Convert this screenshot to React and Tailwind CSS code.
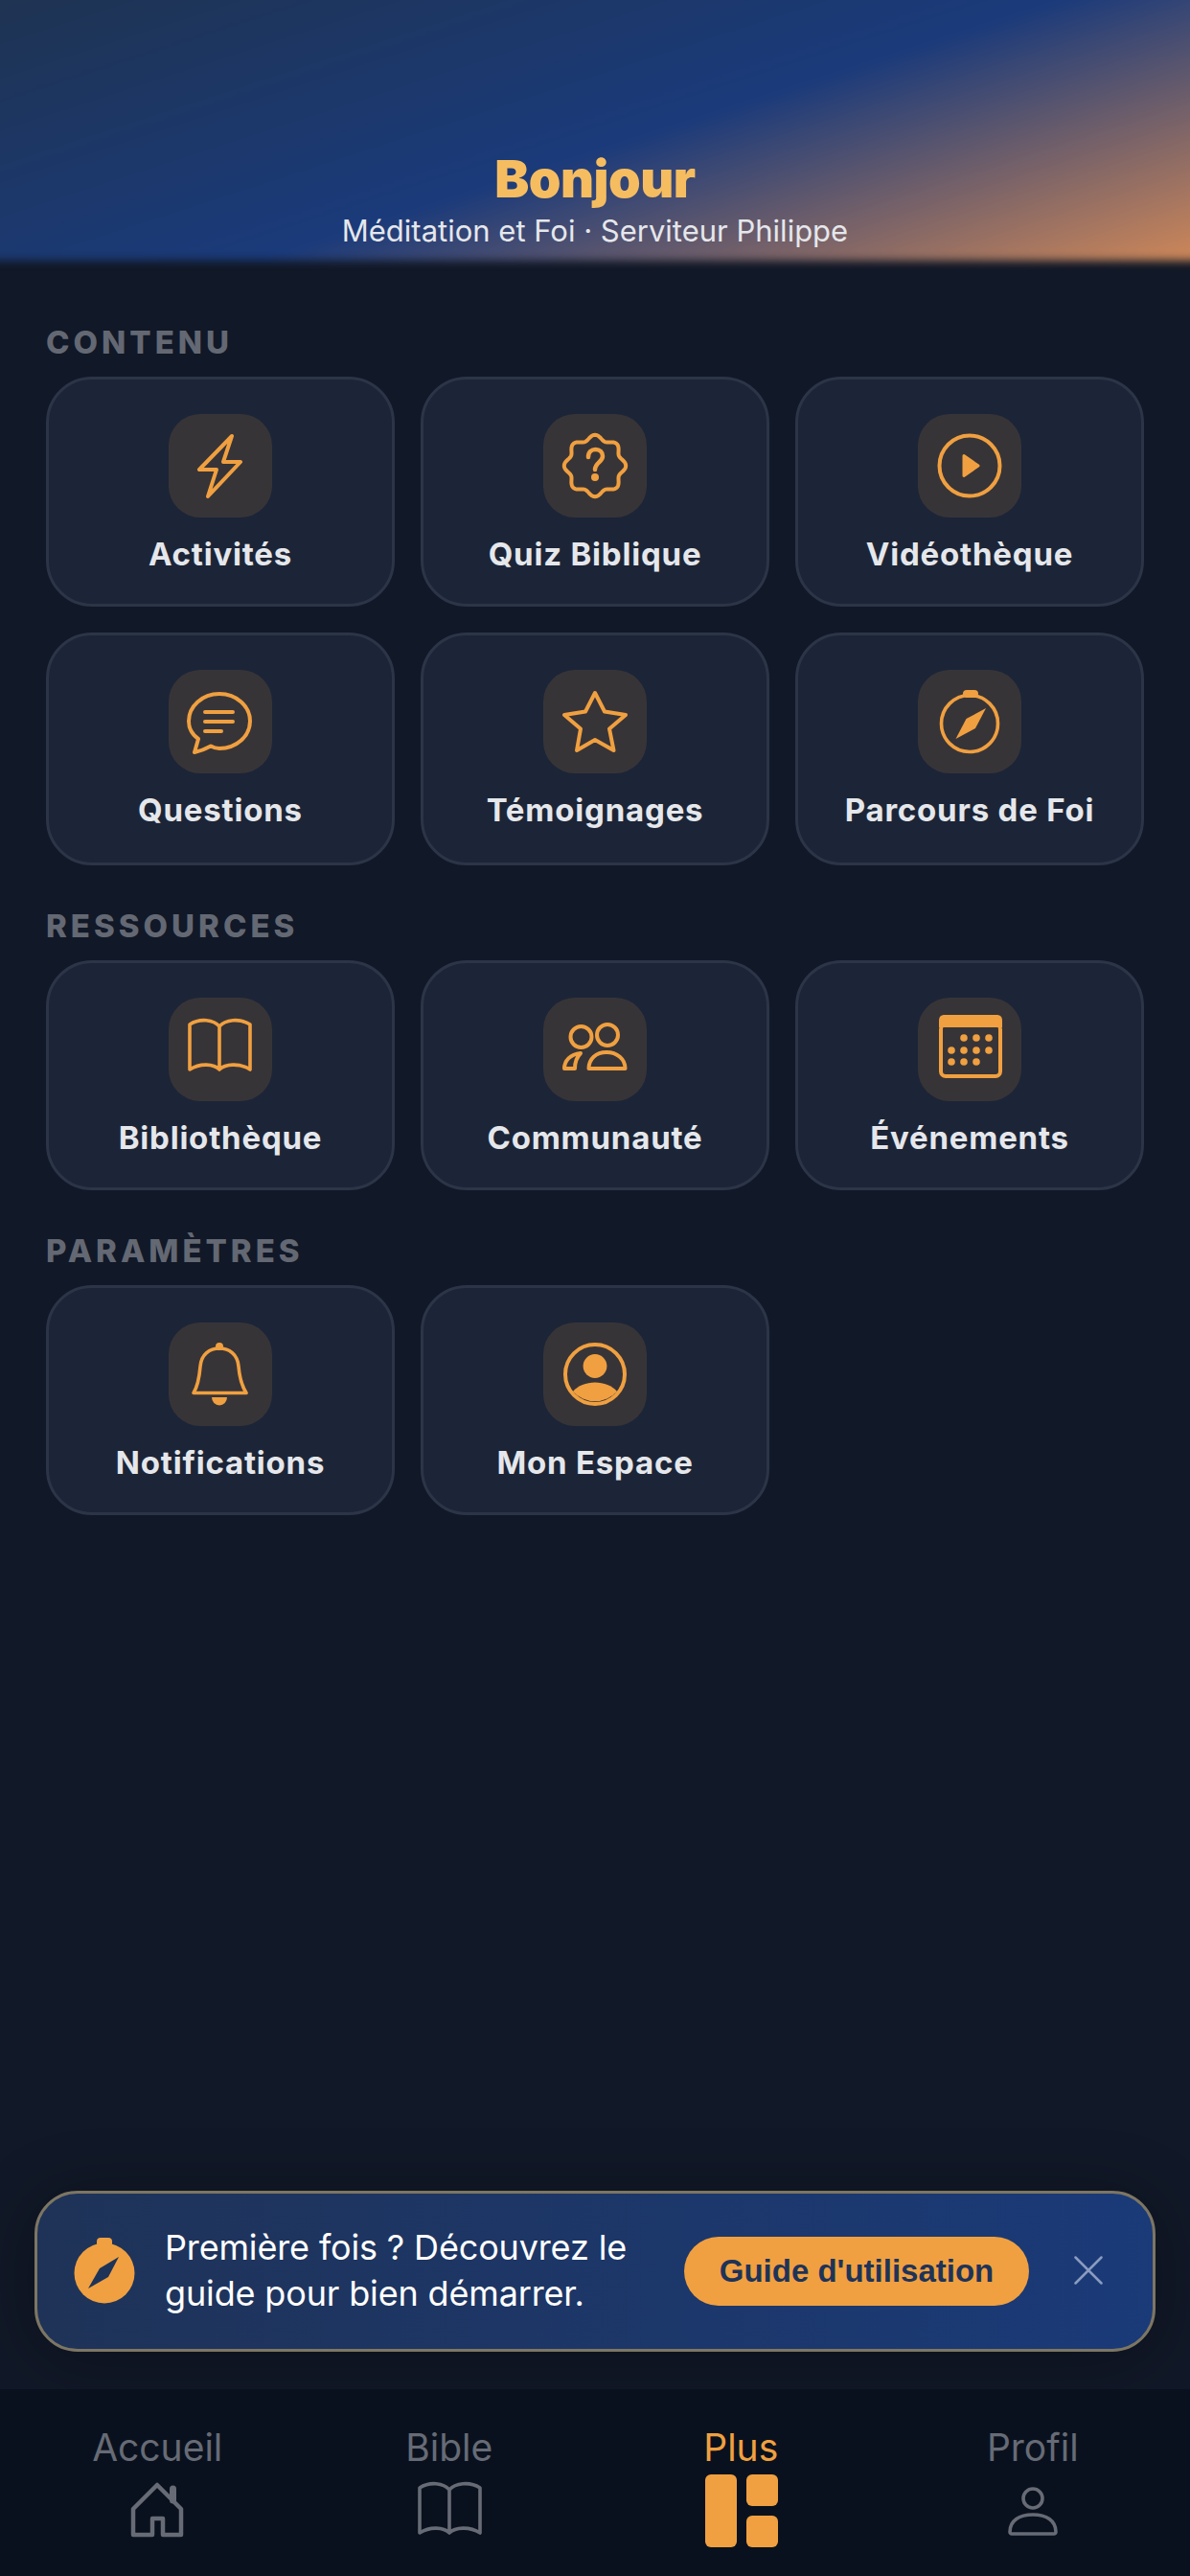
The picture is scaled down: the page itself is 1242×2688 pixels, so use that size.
import React from "react";

const scallop = (() => {
  const n = 8, cx = 54, cy = 54, R = 29.6, A = 2.6;
  let d = "";
  for (let i = 0; i <= 160; i++) {
    const t = (i / 160) * Math.PI * 2;
    const r = R + A * Math.cos(n * t);
    const x = cx + r * Math.sin(t), y = cy - r * Math.cos(t);
    d += (i ? "L" : "M") + x.toFixed(2) + " " + y.toFixed(2);
  }
  return d + "Z";
})();

const S = ({ children, size = 108, vb = "0 0 108 108", className = "" }) => (
  <svg width={size} height={size} viewBox={vb} fill="none" stroke="currentColor" strokeWidth="4" strokeLinejoin="round" strokeLinecap="round" className={className}>
    {children}
  </svg>
);

const icons = {
  bolt: <path d="M66 23L32 58H50L41 86L75 50H57Z" />,
  quiz: (
    <>
      <path d={scallop} />
      <path d="M47 45C47 39.500 50.500 37 54.500 37C59 37 62 40 62 44C62 50 54 51 54 58" strokeWidth="4.500" />
      <circle cx="54" cy="66" r="4" fill="currentColor" stroke="none" />
    </>
  ),
  play: (
    <>
      <circle cx="54" cy="54" r="31.500" />
      <path d="M48 43.500L63 54L48 64.500Z" fill="currentColor" strokeWidth="3" />
    </>
  ),
  chat: (
    <>
      <path d="M44 79.500Q48.500 82 53 82C71 82 85 69 85 53.500C85 38 71 25 53 25C35 25 21 38 21 53.500C21 61 24 67 31 72L27 86Q36 84 44 79.500Z" />
      <path d="M38 44H67M38 54H67M38 64H55" />
    </>
  ),
  star: <path d="M54 24L64 43.500L86 47L69 61.500L73.500 84L54 73L35 84L39 61.500L22 47L44 43.500Z" />,
  compass: (
    <>
      <circle cx="54" cy="56" r="29.500" strokeWidth="3.600" />
      <rect x="47" y="21" width="16" height="8" rx="4" fill="currentColor" stroke="none" />
      <path d="M71 40L60 61L39.500 72L50.500 51Z" fill="currentColor" stroke="none" />
    </>
  ),
  book: <path d="M53 30C47 23 33 21 22 28V75C33 68 47 69 53 75C59 69 74 68 85 75V28C74 21 59 23 53 30ZM53 30V75" strokeWidth="3.600" strokeLinecap="butt" />,
  people: (
    <>
      <circle cx="67" cy="39" r="11" />
      <circle cx="39.500" cy="41" r="11" />
      <path d="M47.500 74C47.500 64 55 57 66 57C77 57 85.500 64 85.500 74Z" />
      <path d="M22 74C22 66 28 59 39 58C35 62 33 67 33 74Z" />
    </>
  ),
  calendar: (
    <>
      <path d="M22 24C22 20 24 18 28 18H82C86 18 88 20 88 24V31H22Z" fill="currentColor" stroke="none" />
      <rect x="24" y="28" width="62" height="54" rx="5" />
      {[[48, 42], [61, 42], [74, 42], [35, 55], [48, 55], [61, 55], [74, 55], [35, 67], [48, 67], [61, 67]].map(([x, y]) => (
        <circle key={x + "-" + y} cx={x} cy={y} r="3.800" fill="currentColor" stroke="none" />
      ))}
    </>
  ),
  bell: (
    <>
      <path d="M26 73.500C30 67 32 58 33 46C34 33 43 27 53 27C63 27 72 33 73 46C74 58 77 67 81 73.500Z" strokeWidth="3.600" />
      <circle cx="53" cy="25" r="4" fill="currentColor" stroke="none" />
      <path d="M45 78H61A8 8.500 0 0 1 45 78Z" fill="currentColor" stroke="none" />
    </>
  ),
  user: (
    <>
      <circle cx="54" cy="54" r="31" />
      <circle cx="54" cy="45.500" r="12.400" fill="currentColor" stroke="none" />
      <path d="M31 72C36 66 45 62.500 54 62.500C63 62.500 72 66 77 72A31 31 0 0 1 31 72Z" fill="currentColor" stroke="none" />
    </>
  ),
};

const Card = ({ icon, label, tall }) => (
  <div className={(tall ? "h-[243px]" : "h-[240px]") + " rounded-[48px] border-[3px] border-[#2c3547] bg-[#1c2537] flex flex-col items-center pt-[36px]"}>
    <div className="w-[108px] h-[108px] rounded-[33px] bg-[#373438] text-[#f0a040]">
      <S>{icons[icon]}</S>
    </div>
    <div className="mt-[18px] text-[33px] leading-[40px] font-bold tracking-[0.8px] text-[#e5e7eb] whitespace-nowrap">{label}</div>
  </div>
);

const Section = ({ title, items, first }) => (
  <section className={first ? "" : "mt-[45px]"}>
    <h2 className="text-[33px] leading-[36px] font-extrabold tracking-[4px] text-[#636873] mb-[18px]">{title}</h2>
    <div className="grid grid-cols-3 gap-[27px]">
      {items.map(([icon, label], i) => <Card key={label} icon={icon} label={label} tall={i >= 3} />)}
    </div>
  </section>
);

const Tab = ({ label, active, children }) => (
  <div className={"flex-1 flex flex-col items-center " + (active ? "text-[#f0a040]" : "text-[#666b75]")}>
    <div className="text-[39px] leading-[48px] mt-[37px]">{label}</div>
    <div className="h-[78px] mt-[3px] flex items-center justify-center">{children}</div>
  </div>
);

export default function App() {
  return (
    <div className="relative w-[1242px] h-[2688px] overflow-hidden bg-[#111827] flex flex-col font-['Inter',sans-serif]">
      <header className="relative h-[272px] shrink-0 flex flex-col items-center justify-end pb-[11px]">
        <div className="absolute -top-4 -left-4 -right-4 bottom-0 blur-[5px] bg-[linear-gradient(162deg,#1f3350_0%,#1a3a7a_54%,#d08858_100%)]" />
        <h1 className="relative text-[54px] leading-[60px] font-black text-[#f6bd60] tracking-[-0.5px]">Bonjour</h1>
        <p className="relative mt-[4px] text-[31px] leading-[40px] text-[#e5e7eb]">Méditation et Foi · Serviteur Philippe</p>
      </header>

      <main className="flex-1 px-12 pt-[67px]">
        <Section first title="CONTENU" items={[["bolt", "Activités"], ["quiz", "Quiz Biblique"], ["play", "Vidéothèque"], ["chat", "Questions"], ["star", "Témoignages"], ["compass", "Parcours de Foi"]]} />
        <Section title="RESSOURCES" items={[["book", "Bibliothèque"], ["people", "Communauté"], ["calendar", "Événements"]]} />
        <Section title="PARAMÈTRES" items={[["bell", "Notifications"], ["user", "Mon Espace"]]} />
      </main>

      <div className="mx-9 mb-[39px] h-[168px] shrink-0 rounded-[45px] border-[3px] border-[#7d7663] bg-[linear-gradient(90deg,#1f3358,#1a3a78)] shadow-[0_8px_70px_rgba(0,0,0,0.3)] flex items-center pl-[38px]">
        <svg width="64" height="70" viewBox="0 0 64 70" className="shrink-0">
          <rect x="24" y="0" width="16" height="10" rx="4" fill="#f0a040" />
          <circle cx="32" cy="37" r="31.500" fill="#f0a040" />
          <path d="M47 20L36 41L15 53L27 32Z" fill="#1e3358" />
        </svg>
        <p className="ml-[31px] -mt-[3px] w-[542px] shrink-0 text-[36px] leading-[48px] tracking-[-0.15px] text-white">Première fois ? Découvrez le guide pour bien démarrer.</p>
        <button className="w-[360px] h-[72px] shrink-0 rounded-full bg-[#f0a040] font-['Liberation_Sans',sans-serif] font-bold text-[33px] text-[#1e3358]">Guide d'utilisation</button>
        <svg width="30" height="30" viewBox="0 0 30 30" className="ml-[47px] -mt-[2px] text-[#8a9cc0]" stroke="currentColor" strokeWidth="2.500" strokeLinecap="round">
          <path d="M1.500 1.500L28.500 28.500M28.500 1.500L1.500 28.500" />
        </svg>
      </div>

      <nav className="h-[195px] shrink-0 bg-[#0a111e] flex px-3">
        <Tab label="Accueil">
          <svg width="56" height="62" viewBox="0 0 56 62" fill="none" stroke="currentColor" strokeWidth="4.500" strokeLinejoin="round">
            <path d="M3 29L28 4L53 29V56H34V39H23V56H3Z" />
            <path d="M44.500 8V20" strokeWidth="7" strokeLinecap="round" />
          </svg>
        </Tab>
        <Tab label="Bible">
          <S size={70} vb="18 18 70 62" className="-mt-[6px]">
            <path d="M53 30C47 23 33 21 22 28V75C33 68 47 69 53 75C59 69 74 68 85 75V28C74 21 59 23 53 30ZM53 30V75" strokeWidth="3.600" strokeLinecap="butt" />
          </S>
        </Tab>
        <Tab active label="Plus">
          <div className="flex gap-[10px] w-[78px] h-[76px] ml-1">
            <div className="w-[33px] h-full rounded-[6px] bg-[#f0a040]" />
            <div className="w-[33px] h-full flex flex-col gap-[10px]">
              <div className="flex-1 rounded-[6px] bg-[#f0a040]" />
              <div className="flex-1 rounded-[6px] bg-[#f0a040]" />
            </div>
          </div>
        </Tab>
        <Tab label="Profil">
          <svg width="54" height="54" viewBox="0 0 54 54" fill="none" stroke="currentColor" strokeWidth="3.600">
            <circle cx="27" cy="14" r="10" />
            <path d="M3 49C3 37 13 31 27 31C41 31 51 37 51 49C51 50 50 51 49 51H5C4 51 3 50 3 49Z" />
          </svg>
        </Tab>
      </nav>
    </div>
  );
}
